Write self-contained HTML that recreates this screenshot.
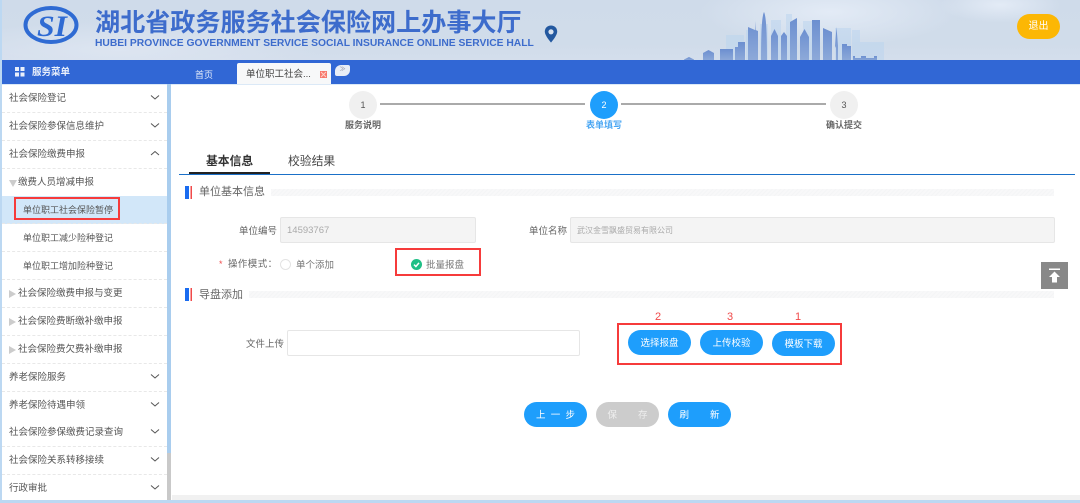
<!DOCTYPE html>
<html lang="zh"><head><meta charset="utf-8"><title>湖北省政务服务社会保险网上办事大厅</title>
<style>
*{box-sizing:border-box}
html,body{margin:0;padding:0;width:1080px;height:503px;overflow:hidden;background:#fff;font-family:"Liberation Sans","Noto Sans CJK SC",sans-serif;color:#555}
.a{position:absolute;white-space:nowrap}
#hd{left:0;top:0;width:1080px;height:61px;background:radial-gradient(ellipse 130px 35px at 830px 12px,#e3ebf6 0,rgba(227,235,246,0) 100%),radial-gradient(ellipse 200px 30px at 120px 50px,#dde5f1 0,rgba(221,229,241,0) 100%),radial-gradient(ellipse 60px 18px at 1000px 5px,#e3ebf6 0,rgba(227,235,246,0) 100%),linear-gradient(180deg,#cfdbea,#d0dcea 70%,#d4deec)}
#nav{left:2px;top:60px;width:1078px;height:24px;background:#3167d5}
.side{left:2px;width:165px;height:28px;border-bottom:1px dashed #e8e8e8;font-size:9.5px;line-height:28px;color:#555;background:#fff;padding-left:7px}
.s2{padding-left:16px}.s3{padding-left:21px;font-size:9px}
.chev{position:absolute;left:148px;top:9px}
.tri{position:absolute;left:7px;top:10px;width:0;height:0}
.tr{border-left:7px solid #ccc;border-top:4px solid transparent;border-bottom:4px solid transparent}
.td{border-top:7px solid #ccc;border-left:4px solid transparent;border-right:4px solid transparent;top:11px}
.btn{position:absolute;height:25px;width:63px;border-radius:13px;background:#1e9efc;color:#fff;font-size:9.5px;line-height:27px;text-align:center;white-space:pre}
.step{position:absolute;width:28px;height:28px;border-radius:50%;background:#f0f0f0;top:91px;text-align:center;line-height:28px;font-size:9px;color:#555}
.lbl{position:absolute;font-size:9px;font-weight:bold;top:118px;white-space:nowrap;color:#666}
.ln{position:absolute;height:2px;top:103px;background:#aaa}
.bar{position:absolute;width:7px;height:13px;background:linear-gradient(90deg,#1a6cf0 0 4px,#fff 4px 5.5px,#f04a4a 5.5px 7px)}
.stripe{position:absolute;height:7px;background:repeating-linear-gradient(135deg,#f4f5f6 0 1px,#f8f8f9 1px 3px)}
.red{position:absolute;border:2px solid #f63b3b}
.inp{position:absolute;height:26px;border:1px solid #e6e6e6;border-radius:2px;background:#f4f4f4;font-size:9.5px;line-height:25px;padding-left:6px;color:#aaa;white-space:nowrap}
.t9{position:absolute;font-size:9.5px;white-space:nowrap;color:#666}
.num{position:absolute;font-size:11px;line-height:14px;color:#f04a4a;font-family:"Liberation Sans",sans-serif}
</style></head><body>
<div class="a" id="hd"></div>
<div class="a" style="left:0;top:0;width:2px;height:503px;background:#bcd8f2"></div>

<svg class="a" style="left:20px;top:3px" width="62" height="44" viewBox="0 0 62 44">
<ellipse cx="31" cy="22" rx="25.5" ry="17" fill="none" stroke="#2f6bd3" stroke-width="4"/>
<text x="17" y="33" font-family="Liberation Serif,serif" font-style="italic" font-weight="bold" font-size="30" fill="#2f6bd3" textLength="30" lengthAdjust="spacingAndGlyphs">SI</text>
</svg>
<div class="a" style="left:95px;top:5px;font-size:25.1px;line-height:36px;font-weight:bold;color:#3d6ccc">湖北省政务服务社会保险网上办事大厅</div>
<div class="a" style="left:95px;top:37px;font-size:10.3px;line-height:14px;font-weight:bold;color:#3d6ccc">HUBEI PROVINCE GOVERNMENT SERVICE SOCIAL INSURANCE ONLINE SERVICE HALL</div>
<svg class="a" style="left:544px;top:25px" width="14" height="18" viewBox="0 0 14 18"><path d="M7 .5C3.4.5.8 3.2.8 6.6.8 10.6 7 17.5 7 17.5s6.2-6.9 6.2-10.9C13.2 3.2 10.6.5 7 .5Z" fill="#23589f"/><circle cx="7" cy="6.8" r="2.6" fill="#d8e2ef"/></svg>

<svg class="a" style="left:680px;top:0" width="240" height="61" viewBox="680 0 240 61">
<defs><linearGradient id="g" x1="0" y1="0" x2="0" y2="1"><stop offset="0" stop-color="#6c8fd0"/><stop offset="1" stop-color="#8eaad9"/></linearGradient></defs>
<g fill="#bcd5ef" opacity=".55"><rect x="726" y="35" width="18" height="25"/><rect x="746" y="30" width="10" height="30"/><rect x="760" y="24" width="8" height="36"/><rect x="771" y="20" width="10" height="40"/><rect x="786" y="14" width="6" height="46"/><rect x="803" y="21" width="9" height="39"/><rect x="835" y="28" width="16" height="32"/><rect x="852" y="30" width="8" height="30"/><rect x="860" y="42" width="24" height="18"/></g>
<g fill="url(#g)">
<path d="M684 61V59.500L689 57 694 59.500V61Z"/>
<path d="M703 61V53L708.500 50 714 53V61Z"/>
<rect x="720" y="49" width="13" height="12"/>
<path d="M735 61V47H738V42H745V61Z"/>
<path d="M748 61V27L755 30V21L755.600 30 758 31V61Z"/>
<path d="M761 61C761 30 762 16 764 12 766 16 767 30 767 61Z"/>
<path d="M771 61V36L774.500 29 778 36V61Z"/>
<path d="M781 61V36L784 32 787 36V61Z"/>
<path d="M790 61V22L797 18V61Z"/>
<path d="M800 61V37L804.500 29 809 37V61Z"/>
<rect x="812" y="20" width="8" height="41"/>
<path d="M823 61V28L832 32V61Z"/>
<path d="M836 61V48L835 46 836.500 27 838 46 838 61Z"/>
<path d="M842 61V44H847V46H851V61Z"/>
<path d="M853 61V56H855V58H861V56H866V58H874V56H877V61Z"/>
</g></svg>
<div class="a" style="left:1017px;top:14px;width:43px;height:25px;border-radius:13px;background:#fcb704;color:#fff;font-size:10px;line-height:26px;text-align:center">退出</div>

<div class="a" id="nav"></div>
<svg class="a" style="left:15px;top:67px" width="10" height="10"><g fill="#eaf0fb"><rect width="4" height="4"/><rect x="5.500" width="4" height="4"/><rect y="5.500" width="4" height="4"/><rect x="5.500" y="5.500" width="4" height="4"/></g></svg>
<div class="a" style="left:32px;top:66px;font-size:9.5px;line-height:14px;font-weight:bold;color:#eaf0fb">服务菜单</div>
<div class="a" style="left:195px;top:68px;font-size:9px;line-height:14px;color:#e6edf9">首页</div>
<div class="a" style="left:237px;top:63px;width:94px;height:21px;background:#f7f8f9;border-radius:2px 2px 0 0"></div>
<div class="a" style="left:246px;top:68px;font-size:9.5px;line-height:14px;color:#444">单位职工社会...</div>
<svg class="a" style="left:320px;top:71px" width="7" height="7"><rect width="7" height="7" fill="#f8786c"/><path d="M1 1 6 6M6 1 1 6" stroke="#fcd0c8"/></svg>
<div class="a" style="left:335px;top:65px;width:15px;height:11px;background:#e8edf6;border-radius:6px 2px 6px 2px;text-align:center;font-size:6px;line-height:10px;color:#889">≫</div>

<div class="a" style="left:2px;top:84px;width:1078px;height:1px;background:#dbe9f7"></div>

<!-- sidebar -->
<div class="a" style="left:167px;top:84px;width:4px;height:419px;background:#a9cdee"></div>
<div class="a" style="left:167px;top:453px;width:4px;height:47px;background:#c9c9c9"></div>
<div class="a side" style="top:85px">社会保险登记<svg class="chev" width="10" height="7"><path d="M1 1.500 5 5 9 1.500" fill="none" stroke="#555"/></svg></div>
<div class="a side" style="top:113px">社会保险参保信息维护<svg class="chev" width="10" height="7"><path d="M1 1.500 5 5 9 1.500" fill="none" stroke="#555"/></svg></div>
<div class="a side" style="top:141px">社会保险缴费申报<svg class="chev" width="10" height="7"><path d="M1 5 5 1.500 9 5" fill="none" stroke="#555"/></svg></div>
<div class="a side s2" style="top:169px"><span class="tri td"></span>缴费人员增减申报</div>
<div class="a side s3" style="top:196px;background:#d2e7f9">单位职工社会保险暂停</div>
<div class="a side s3" style="top:224px">单位职工减少险种登记</div>
<div class="a side s3" style="top:252px">单位职工增加险种登记</div>
<div class="a side s2" style="top:280px"><span class="tri tr"></span>社会保险缴费申报与变更</div>
<div class="a side s2" style="top:308px"><span class="tri tr"></span>社会保险费断缴补缴申报</div>
<div class="a side s2" style="top:336px"><span class="tri tr"></span>社会保险费欠费补缴申报</div>
<div class="a side" style="top:364px">养老保险服务<svg class="chev" width="10" height="7"><path d="M1 1.500 5 5 9 1.500" fill="none" stroke="#555"/></svg></div>
<div class="a side" style="top:392px">养老保险待遇申领<svg class="chev" width="10" height="7"><path d="M1 1.500 5 5 9 1.500" fill="none" stroke="#555"/></svg></div>
<div class="a side" style="top:419px">社会保险参保缴费记录查询<svg class="chev" width="10" height="7"><path d="M1 1.500 5 5 9 1.500" fill="none" stroke="#555"/></svg></div>
<div class="a side" style="top:447px">社会保险关系转移接续<svg class="chev" width="10" height="7"><path d="M1 1.500 5 5 9 1.500" fill="none" stroke="#555"/></svg></div>
<div class="a side" style="top:475px;border:0">行政审批<svg class="chev" width="10" height="7"><path d="M1 1.500 5 5 9 1.500" fill="none" stroke="#555"/></svg></div>
<div class="a" style="left:0;top:500px;width:1080px;height:3px;background:#bcd8f2"></div>
<div class="a" style="left:172px;top:495px;width:908px;height:5px;background:#f1f1f1"></div>
<div class="red" style="left:14px;top:197px;width:106px;height:23px"></div>

<!-- steps -->
<div class="step" style="left:349px">1</div>
<div class="ln" style="left:380px;width:205px"></div>
<div class="step" style="left:590px;background:#1e9efc;color:#fff">2</div>
<div class="ln" style="left:621px;width:205px"></div>
<div class="step" style="left:830px">3</div>
<div class="lbl" style="left:345px">服务说明</div>
<div class="lbl" style="left:586px;color:#48a6f3">表单填写</div>
<div class="lbl" style="left:826px">确认提交</div>

<!-- tabs -->
<div class="a" style="left:206px;top:152px;font-size:11.8px;line-height:18px;font-weight:bold;color:#333">基本信息</div>
<div class="a" style="left:288px;top:152px;font-size:11.8px;line-height:18px;color:#444">校验结果</div>
<div class="a" style="left:189px;top:172px;width:81px;height:2px;background:#222"></div>
<div class="a" style="left:179px;top:174px;width:896px;height:1px;background:#1a70c8"></div>

<!-- section 1 -->
<div class="bar" style="left:185px;top:186px"></div>
<div class="a" style="left:199px;top:185px;font-size:11px;line-height:14px;color:#666">单位基本信息</div>
<div class="stripe" style="left:271px;top:189px;width:783px"></div>
<div class="t9" style="left:239px;top:223px">单位编号</div>
<div class="inp" style="left:280px;top:217px;width:196px">14593767</div>
<div class="t9" style="left:529px;top:223px">单位名称</div>
<div class="inp" style="left:570px;top:217px;width:485px;font-size:8px">武汉金雪飘盛贸易有限公司</div>
<div class="a" style="left:219px;top:258px;font-size:9px;line-height:12px;color:#f04a4a">*</div>
<div class="t9" style="left:228px;top:256px;letter-spacing:.4px">操作模式：</div>
<div class="a" style="left:280px;top:259px;width:11px;height:11px;border:1px solid #e3e3e3;border-radius:50%"></div>
<div class="t9" style="left:296px;top:257px;color:#777">单个添加</div>
<svg class="a" style="left:411px;top:259px" width="11" height="11" viewBox="0 0 11 11"><circle cx="5.500" cy="5.500" r="5.500" fill="#1fbf86"/><path d="M3 5.600 4.900 7.500 8 3.900" fill="none" stroke="#fff" stroke-width="1.500"/></svg>
<div class="t9" style="left:426px;top:257px;color:#777">批量报盘</div>
<div class="red" style="left:395px;top:248px;width:86px;height:28px"></div>

<!-- scroll top -->
<div class="a" style="left:1041px;top:262px;width:27px;height:27px;background:#888"></div>
<svg class="a" style="left:1041px;top:262px" width="27" height="27"><path d="M8 6.500H19V8H8ZM13.500 9.500 19 15H16V20.500H11V15H8Z" fill="#fff"/></svg>

<!-- section 2 -->
<div class="bar" style="left:185px;top:288px"></div>
<div class="a" style="left:199px;top:288px;font-size:11px;line-height:14px;color:#666">导盘添加</div>
<div class="stripe" style="left:249px;top:291px;width:805px"></div>
<div class="t9" style="left:246px;top:336px">文件上传</div>
<div class="inp" style="left:287px;top:330px;width:293px;background:#fff"></div>

<div class="num" style="left:655px;top:310px">2</div>
<div class="num" style="left:727px;top:310px">3</div>
<div class="num" style="left:795px;top:310px">1</div>
<div class="red" style="left:617px;top:323px;width:225px;height:42px"></div>
<div class="btn" style="left:628px;top:330px">选择报盘</div>
<div class="btn" style="left:700px;top:330px">上传校验</div>
<div class="btn" style="left:772px;top:331px">模板下载</div>

<div class="btn" style="left:524px;top:402px">上  一  步</div>
<div class="btn" style="left:596px;top:402px;background:#ccc;color:#eee">保        存</div>
<div class="btn" style="left:668px;top:402px">刷        新</div>
</body></html>
